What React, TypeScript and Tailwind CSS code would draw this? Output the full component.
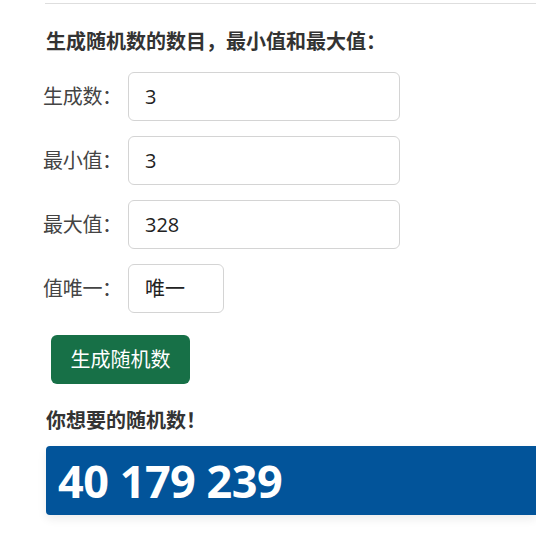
export default function App() {
  const rows = [
    { label: "生成数：", value: "3", w: "w-[272px]" },
    { label: "最小值：", value: "3", w: "w-[272px]" },
    { label: "最大值：", value: "328", w: "w-[272px]" },
    { label: "值唯一：", value: "唯一", w: "w-[96px]" },
  ];

  return (
    <div
      className="min-h-[544px] bg-white overflow-hidden pt-[3px]"
      style={{ fontFamily: '"Open Sans", "Noto Sans CJK SC", sans-serif' }}
    >
      <div className="ml-[45px] border-t border-[#dedede]">
        <h2 className="mt-[24px] ml-px text-[20px] leading-[27px] font-bold text-[#333]">
          生成随机数的数目，最小值和最大值：
        </h2>

        <div className="mt-[17px] flex flex-col gap-[15px]">
          {rows.map((r) => (
            <div key={r.label} className="flex items-center">
              <label className="w-[85px] -ml-[2px] text-[20px] text-[#444] tracking-[-0.3px]">
                {r.label}
              </label>
              <div
                className={`${r.w} h-[49px] flex items-center px-4 border border-[#d4d4d4] rounded-[6px] text-[20px] text-[#222]`}
              >
                {r.value}
              </div>
            </div>
          ))}
        </div>

        <button className="mt-[22px] ml-[6px] w-[139px] h-[49px] rounded-[6px] bg-[#177047] text-white text-[20px]">
          生成随机数
        </button>

        <h2 className="mt-[23px] ml-px text-[20px] leading-[27px] font-bold text-[#333]">
          你想要的随机数！
        </h2>

        <div className="mt-[12px] ml-px h-[69px] rounded-l-[4px] bg-[#02549a] flex items-center pl-[12px] shadow-[0_4px_10px_rgba(0,0,0,0.08)]">
          <span className="text-[45px] font-bold text-white leading-none tracking-[-0.5px]">
            40 179 239
          </span>
        </div>
      </div>
    </div>
  );
}
